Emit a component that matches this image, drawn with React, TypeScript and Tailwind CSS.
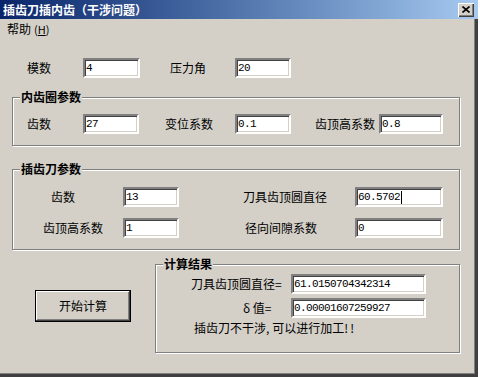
const cjk = "font-['Noto_Sans_CJK_SC','Noto_Sans',sans-serif]";

function Field({ value, width, caret }: { value: string; width: string; caret?: boolean }) {
  return (
    <div
      className={`${width} h-[20px] bg-white border-2 border-t-[#808080] border-l-[#808080] border-b-white border-r-white shadow-[inset_1px_1px_0_#404040,inset_-1px_-1px_0_#d4d0c8] flex items-center pl-[1px]`}
    >
      <span className="font-['Liberation_Mono',monospace] text-[11px] tracking-[-0.6px] text-black leading-none">
        {value}
      </span>
      {caret && <span className="w-[1px] h-[13px] bg-black ml-[1px]" />}
    </div>
  );
}

function Group({ title, className, children }: { title: string; className: string; children: React.ReactNode }) {
  return (
    <div
      className={`relative border border-[#808080] shadow-[inset_1px_1px_0_#ffffff,1px_1px_0_#ffffff] ${className}`}
    >
      <span className="absolute left-[7px] -top-[8px] bg-[#d4d0c8] px-[1px] text-[12px] leading-[14px] font-bold text-black">
        {title}
      </span>
      {children}
    </div>
  );
}

export default function App() {
  return (
    <div className={`w-[480px] h-[377px] bg-white ${cjk}`}>
      <div className="w-[478px] h-[377px] bg-[#d4d0c8] flex flex-col shadow-[inset_-1px_-1px_0_#404040,inset_-3px_-3px_0_#404040,inset_-4px_-4px_0_#808080] text-[12px] leading-[14px] text-black">
        {/* title bar */}
        <div className="h-[19px] flex items-center justify-between bg-gradient-to-r from-[#0a246a] to-[#a6caf0] pl-[3px] pr-[4px]">
          <span className="text-white font-bold text-[12px] leading-[14px]">插齿刀插内齿（干涉问题）</span>
          <div className="w-[16px] h-[14px] bg-[#d4d0c8] shadow-[inset_1px_1px_0_#ffffff,inset_-1px_-1px_0_#404040,inset_-2px_-2px_0_#808080] flex items-center justify-center">
            <svg width="8" height="7" viewBox="0 0 8 7">
              <path d="M0.5 0.5 L7.5 6.5 M7.5 0.5 L0.5 6.5" stroke="#000" strokeWidth="1.6" />
            </svg>
          </div>
        </div>

        {/* menu */}
        <div className="h-[19px] flex items-center pl-[7px]">
          <span>
            帮助<span className="ml-[3px] text-[11px]">(<span className="underline">H</span>)</span>
          </span>
        </div>

        {/* module / pressure angle */}
        <div className="mt-[20px] h-[20px] flex items-center pl-[27px]">
          <span className="w-[56px]">模数</span>
          <Field value="4" width="w-[57px]" />
          <span className="ml-[30px] w-[65px]">压力角</span>
          <Field value="20" width="w-[56px]" />
        </div>

        {/* internal gear */}
        <Group title="内齿圈参数" className="mt-[19px] ml-[12px] w-[448px] h-[49px]">
          <div className="pt-[16px] pl-[14px] flex items-center h-[36px]">
            <span className="w-[56px]">齿数</span>
            <Field value="27" width="w-[56px]" />
            <span className="ml-[26px] w-[70px]">变位系数</span>
            <Field value="0.1" width="w-[56px]" />
            <span className="ml-[24px] w-[64px]">齿顶高系数</span>
            <Field value="0.8" width="w-[64px]" />
          </div>
        </Group>

        {/* cutter */}
        <Group title="插齿刀参数" className="mt-[23px] ml-[12px] w-[448px] h-[81px]">
          <div className="pt-[17px] flex flex-col gap-[11px]">
            <div className="h-[20px] flex items-center pl-[38px]">
              <span className="w-[72px]">齿数</span>
              <Field value="13" width="w-[56px]" />
              <span className="ml-[64px] w-[112px]">刀具齿顶圆直径</span>
              <Field value="60.5702" width="w-[88px]" caret />
            </div>
            <div className="h-[20px] flex items-center pl-[30px]">
              <span className="w-[80px]">齿顶高系数</span>
              <Field value="1" width="w-[56px]" />
              <span className="ml-[66px] w-[110px]">径向间隙系数</span>
              <Field value="0" width="w-[88px]" />
            </div>
          </div>
        </Group>

        {/* bottom */}
        <div className="mt-[14px] flex items-start">
          <button className="ml-[35px] mt-[26px] w-[96px] h-[32px] border border-black bg-[#d4d0c8] shadow-[inset_-1px_-1px_0_#404040,inset_1px_1px_0_#ffffff,inset_-2px_-2px_0_#808080] text-[12px]">
            开始计算
          </button>
          <Group title="计算结果" className="ml-[24px] w-[305px] h-[89px]">
            <div className="pt-[9px] flex flex-col">
              <div className="h-[20px] flex items-center pl-[35px]">
                <span className="w-[100px]">刀具齿顶圆直径=</span>
                <Field value="61.0150704342314" width="w-[135px]" />
              </div>
              <div className="mt-[4px] h-[20px] flex items-center pl-[87px]">
                <span className="w-[48px]">δ 值=</span>
                <Field value="0.00001607259927" width="w-[135px]" />
              </div>
              <div className="mt-[3px] pl-[38px]">
                插齿刀不干涉,<span className="ml-[3px]">可以进行加工</span>
                <span className="tracking-[2px]">!!</span>
              </div>
            </div>
          </Group>
        </div>
      </div>
    </div>
  );
}
